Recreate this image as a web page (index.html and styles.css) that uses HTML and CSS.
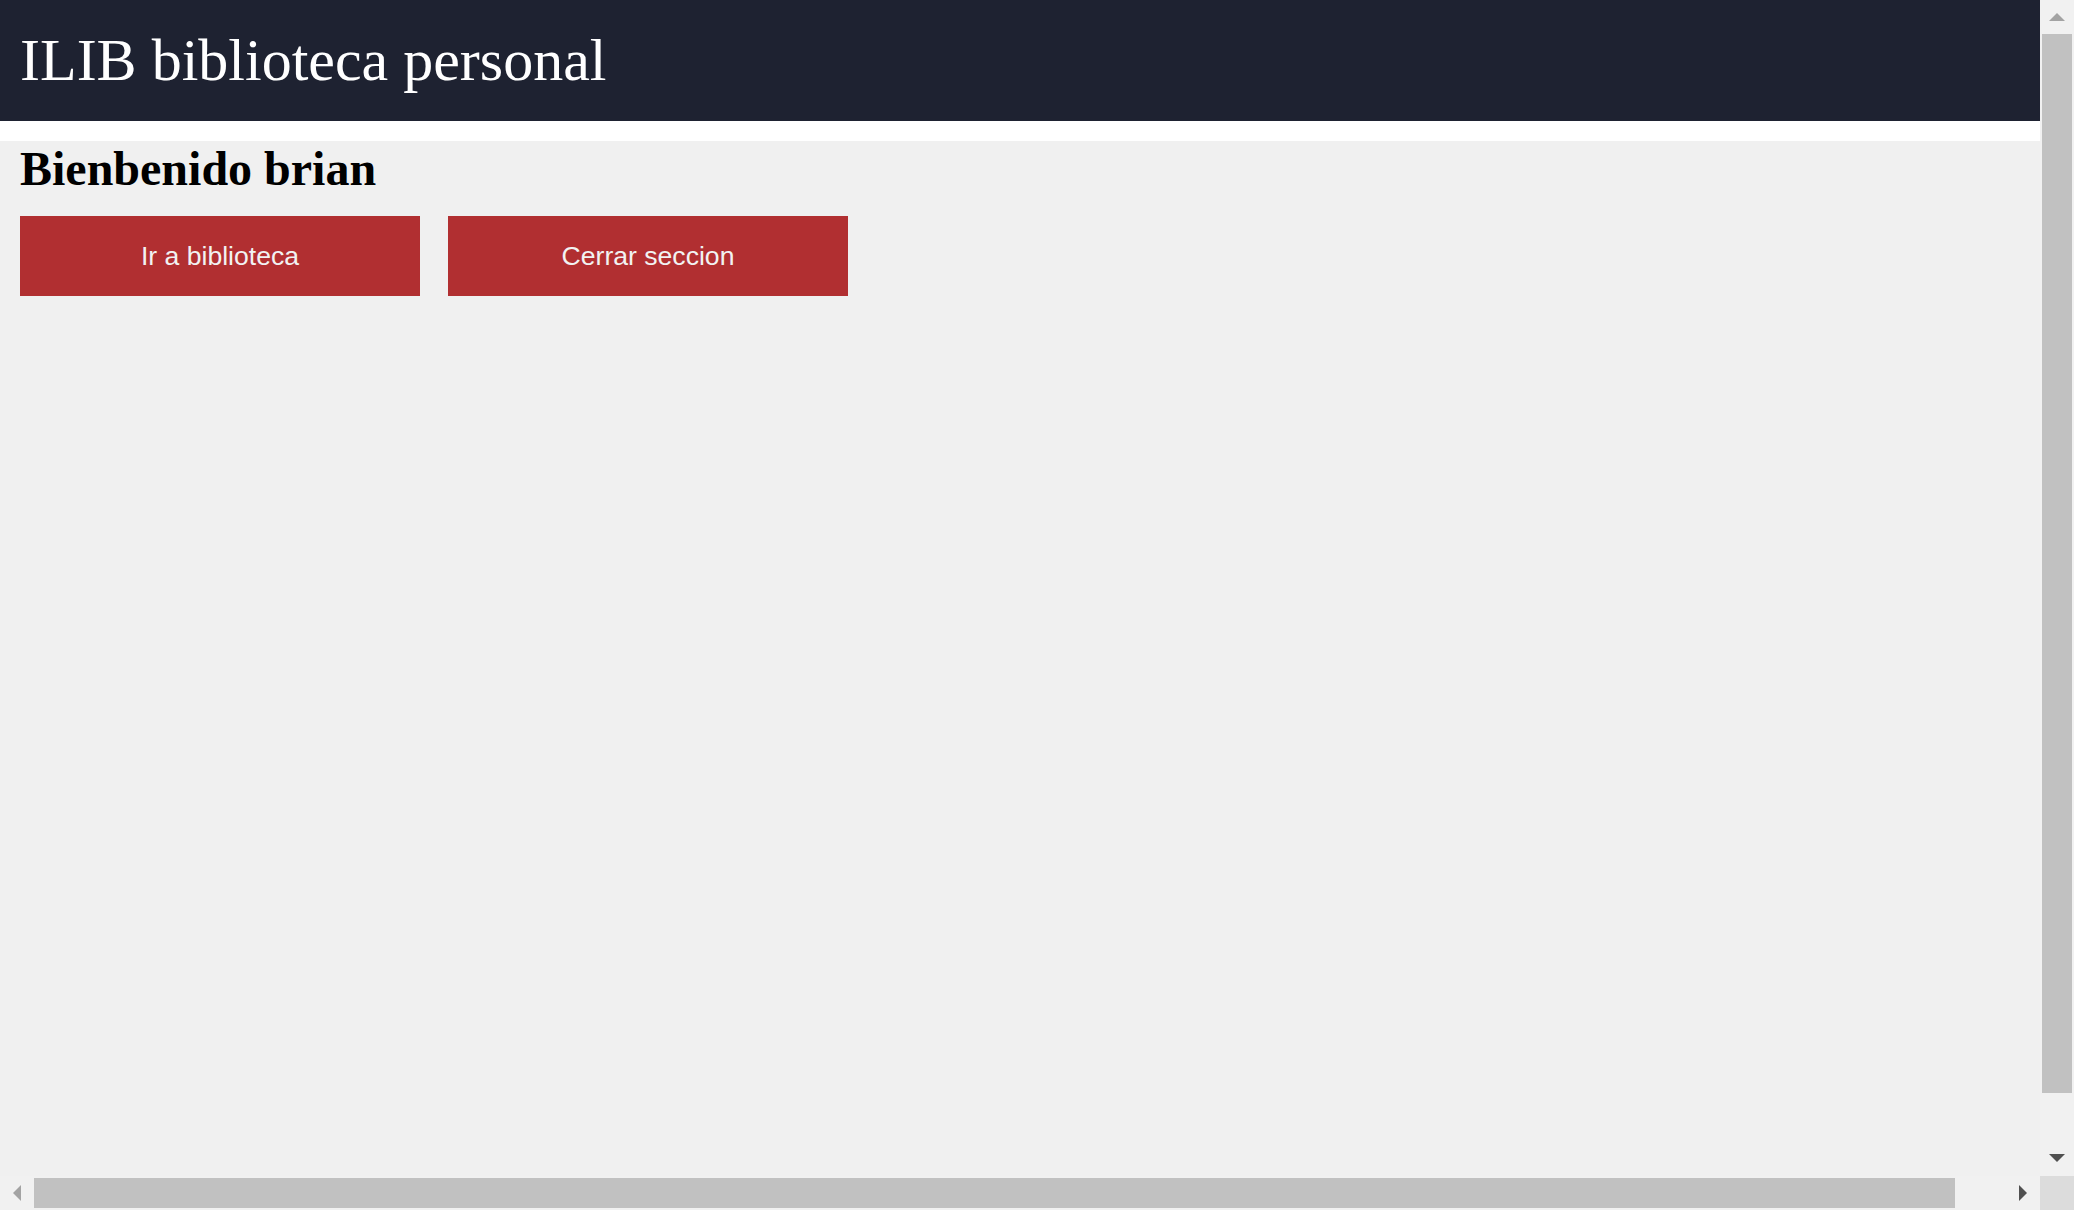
FILE: index.html
```html
<!DOCTYPE html>
<html lang="es">
<head>
<meta charset="utf-8">
<title>ILIB biblioteca personal</title>
<link rel="stylesheet" href="styles.css">
</head>
<body>
<div class="page">
  <header class="topbar">
    <h1 class="brand">ILIB biblioteca personal</h1>
  </header>
  <main class="content">
    <h2 class="welcome">Bienbenido brian</h2>
    <div class="actions">
      <button class="btn" type="button">Ir a biblioteca</button>
      <button class="btn" type="button">Cerrar seccion</button>
    </div>
  </main>
</div>

<div class="vscroll" aria-hidden="true">
  <div class="sb-btn">
    <svg width="16" height="8" viewBox="0 0 16 8"><path d="M0 8 L8 0 L16 8 Z" fill="#a3a3a3"/></svg>
  </div>
  <div class="v-track"><div class="v-thumb"></div></div>
  <div class="sb-btn sb-btn-down">
    <svg width="16" height="8" viewBox="0 0 16 8"><path d="M0 0 L16 0 L8 8 Z" fill="#505050"/></svg>
  </div>
</div>

<div class="hscroll" aria-hidden="true">
  <div class="sb-btn">
    <svg width="8" height="16" viewBox="0 0 8 16"><path d="M8 0 L8 16 L0 8 Z" fill="#a3a3a3"/></svg>
  </div>
  <div class="h-track"><div class="h-thumb"></div></div>
  <div class="sb-btn">
    <svg width="8" height="16" viewBox="0 0 8 16"><path d="M0 0 L8 8 L0 16 Z" fill="#505050"/></svg>
  </div>
</div>

<div class="sb-corner" aria-hidden="true"></div>
</body>
</html>
```
FILE: styles.css
```css
html, body {
  margin: 0;
  padding: 0;
}

body {
  background: #ffffff;
  font-family: "Liberation Serif", "Times New Roman", serif;
  overflow: hidden;
}

.page {
  min-height: 100vh;
  display: flex;
  flex-direction: column;
}

.topbar {
  height: 121px;
  background: #1e2231;
  display: flex;
  align-items: center;
  padding: 0 20px;
  box-sizing: border-box;
}

.brand {
  margin: 0;
  font-weight: normal;
  font-size: 60px;
  color: #ffffff;
  line-height: normal;
}

.content {
  margin-top: 20px;
  flex: 1;
  background: #f0f0f0;
  padding: 2px 20px 0;
}

.welcome {
  margin: 0;
  font-size: 48px;
  font-weight: bold;
  line-height: 52px;
  color: #000000;
}

.actions {
  display: flex;
  gap: 28px;
  margin-top: 21px;
}

.btn {
  width: 400px;
  height: 80px;
  border: none;
  background: #b12f31;
  color: #f2f2f2;
  font-family: "Liberation Sans", Arial, sans-serif;
  font-size: 26.6px;
  padding: 0;
  cursor: pointer;
}

/* Window scrollbars (drawn over the page) */
.vscroll {
  position: fixed;
  top: 0;
  right: 0;
  bottom: 34px;
  width: 34px;
  background: #f1f1f1;
  display: flex;
  flex-direction: column;
}

.hscroll {
  position: fixed;
  left: 0;
  right: 34px;
  bottom: 0;
  height: 34px;
  background: #f1f1f1;
  display: flex;
}

.sb-corner {
  position: fixed;
  right: 0;
  bottom: 0;
  width: 34px;
  height: 34px;
  background: #dcdcdc;
}

.sb-btn {
  flex: 0 0 34px;
  width: 34px;
  height: 34px;
  display: flex;
  align-items: center;
  justify-content: center;
}

.sb-btn svg {
  display: block;
}

.sb-btn-down {
  align-items: flex-start;
  padding-top: 12px;
  box-sizing: border-box;
}

.v-track {
  flex: 1;
  padding: 0 2px;
}

.v-thumb {
  height: 1059px;
  background: #c1c1c1;
}

.h-track {
  flex: 1;
  padding: 2px 0;
}

.h-thumb {
  width: 1921px;
  height: 30px;
  background: #c1c1c1;
}
```
